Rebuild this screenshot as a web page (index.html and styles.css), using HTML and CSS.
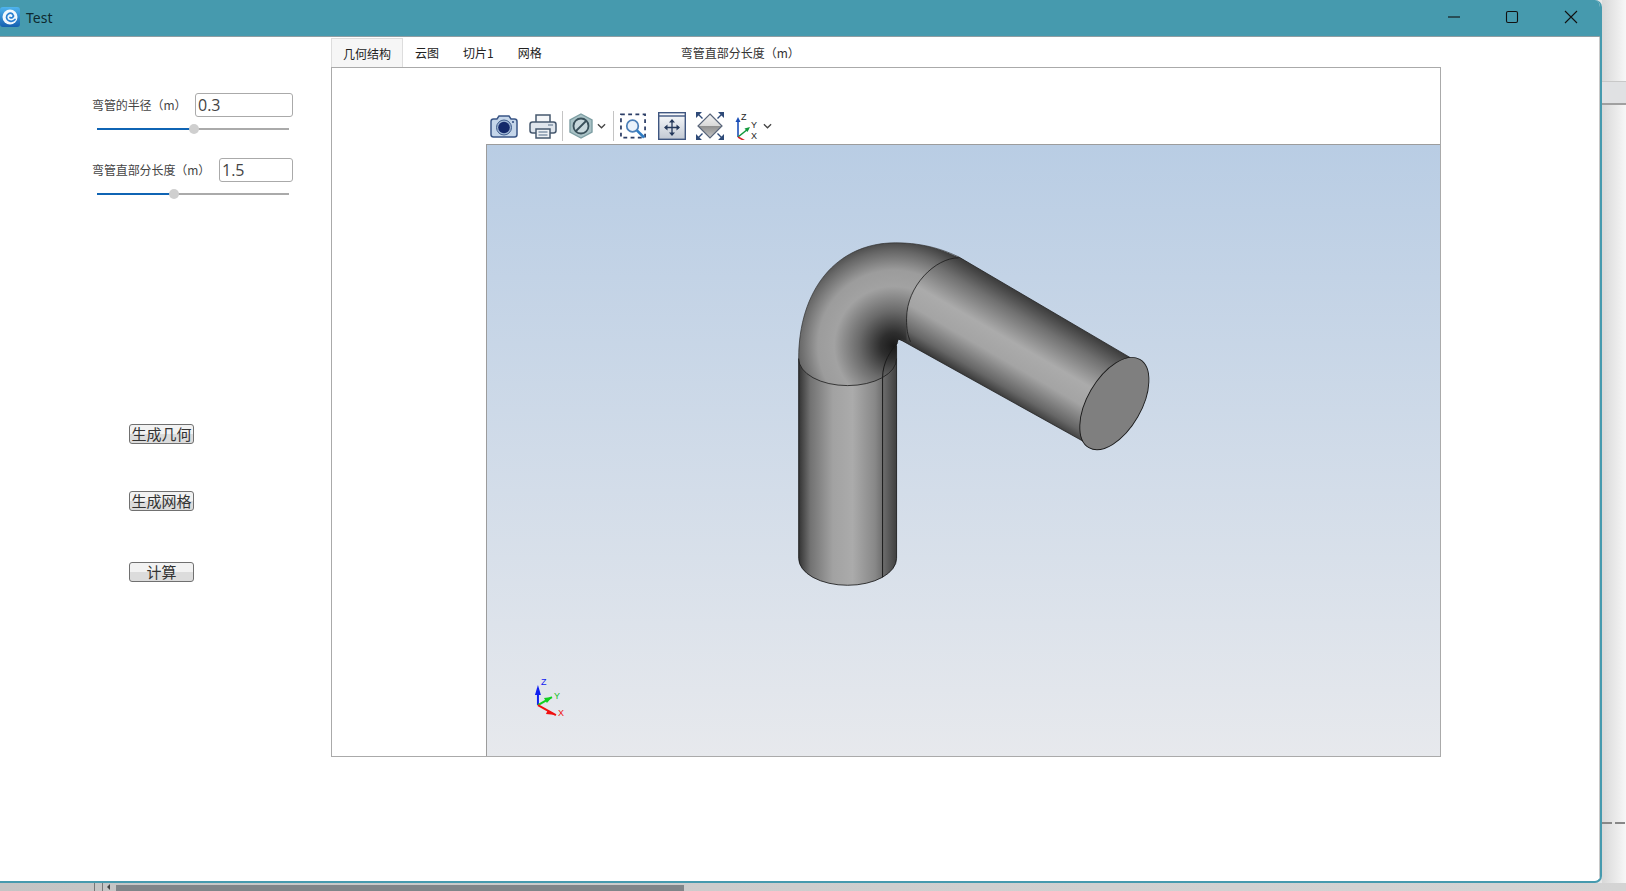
FILE: index.html
```html
<!DOCTYPE html>
<html lang="zh">
<head>
<meta charset="utf-8">
<title>Test</title>
<link rel="stylesheet" href="styles.css">
</head>
<body>
<div class="desktop">
  <div class="window">
    <header class="titlebar">
      <svg class="logo" viewBox="0 0 20 20">
        <defs><linearGradient id="lg" x1="0" y1="0" x2="0" y2="1"><stop offset="0" stop-color="#4fb4ee"/><stop offset="1" stop-color="#1560b0"/></linearGradient></defs>
        <rect width="20" height="20" rx="3" fill="url(#lg)"/>
        <circle cx="10" cy="10" r="7.500" fill="#f2f8fd"/>
        <path d="M15 12.500C12.500 15.500 7 14.500 6.500 10.500C6.300 7 10 5 12.500 7C14.500 9 12.500 12 10 10.500" fill="none" stroke="#2a7fd0" stroke-width="1.700" stroke-linecap="round"/>
      </svg>
      <span class="title">Test</span>
      <div class="controls">
        <svg class="ctl ctl-min" viewBox="0 0 14 14"><path d="M1 7H13" stroke="#111" stroke-width="1.100"/></svg>
        <svg class="ctl ctl-max" viewBox="0 0 14 14"><rect x="1.500" y="1.500" width="11" height="11" rx="1.500" fill="none" stroke="#111" stroke-width="1.100"/></svg>
        <svg class="ctl ctl-close" viewBox="0 0 14 14"><path d="M1 1L13 13M13 1L1 13" stroke="#111" stroke-width="1.100"/></svg>
      </div>
    </header>
    <div class="body">
      <aside class="sidebar">
        <div class="field">
          <div class="field-row"><label class="field-label">弯管的半径（m）</label><input class="field-input field-input-wide" value="0.3"></div>
          <div class="slider"><div class="slider-fill" style="width:50.5%"></div><div class="slider-thumb" style="left:50.5%"></div></div>
        </div>
        <div class="field">
          <div class="field-row"><label class="field-label">弯管直部分长度（m）</label><input class="field-input field-input-narrow" value="1.5"></div>
          <div class="slider"><div class="slider-fill" style="width:40%"></div><div class="slider-thumb" style="left:40%"></div></div>
        </div>
        <div class="actions">
          <button class="btn btn-geo">生成几何</button>
          <button class="btn btn-mesh">生成网格</button>
          <button class="btn btn-calc">计算</button>
        </div>
      </aside>
      <main class="main">
        <nav class="tabs">
          <span class="tab tab-active">几何结构</span>
          <span class="tab">云图</span>
          <span class="tab">切片1</span>
          <span class="tab">网格</span>
          <span class="tab-caption">弯管直部分长度（m）</span>
        </nav>
        <section class="panel">
          <div class="viewer-col">
            <div class="toolbar">
              <svg class="tool tool-camera" viewBox="0 0 28 26">
                <path d="M1 8.500Q1 6 3.500 6H7L9 3H19L21 6H24.500Q27 6 27 8.500V21.500Q27 24 24.500 24H3.500Q1 24 1 21.500Z" fill="#c5d6ea" stroke="#3a5686" stroke-width="1.500"/>
                <circle cx="14" cy="14.500" r="7.500" fill="#9fb6d4" stroke="#3f5c8c"/>
                <circle cx="14" cy="14.500" r="5.800" fill="#14296a"/>
                <circle cx="23" cy="9" r="1" fill="#2c4a80"/>
              </svg>
              <svg class="tool tool-printer" viewBox="0 0 28 26">
                <path d="M7 9V2H21V9" fill="#f4f6f8" stroke="#46586e" stroke-width="1.500"/>
                <rect x="1" y="9" width="26" height="11" rx="2.500" fill="#dfe5ec" stroke="#46586e" stroke-width="1.500"/>
                <path d="M19 12H24" stroke="#8496aa" stroke-width="1.500"/>
                <rect x="7" y="16" width="14" height="9" fill="#eef1f4" stroke="#46586e" stroke-width="1.500"/>
                <path d="M9.500 19H18.500M9.500 22H18.500" stroke="#8496aa" stroke-width="1.300"/>
              </svg>
              <span class="sep"></span>
              <svg class="tool-hex" viewBox="0 0 24 26">
                <path d="M12 1L23 7V19L12 25L1 19V7Z" fill="#a9c2c6" stroke="#7d9ea3" stroke-width="1.400"/>
                <circle cx="12" cy="13" r="7.500" fill="#c8d8dc" stroke="#39505a" stroke-width="1.800"/>
                <path d="M7 18L17 8" stroke="#39505a" stroke-width="1.800"/>
              </svg>
              <svg class="chev chev-hex" viewBox="0 0 10 6"><path d="M1 1L5 5L9 1" fill="none" stroke="#444" stroke-width="1.400"/></svg>
              <span class="sep sep-second"></span>
              <svg class="tool tool-zoom" viewBox="0 0 28 26">
                <rect x="1" y="1" width="25" height="24" fill="none" stroke="#2b3d66" stroke-width="1.800" stroke-dasharray="4 3.500"/>
                <circle cx="13" cy="13" r="6" fill="#eaf2fb" stroke="#4b7fb8" stroke-width="1.800"/>
                <path d="M17.500 17.500L25 25" stroke="#2e7cc4" stroke-width="2.800"/>
              </svg>
              <svg class="tool tool-fit" viewBox="0 0 28 28">
                <defs><linearGradient id="fg" x1="0" y1="0" x2="0" y2="1"><stop offset="0" stop-color="#fafbfd"/><stop offset="1" stop-color="#c2c9d3"/></linearGradient></defs>
                <rect x="0.700" y="0.700" width="26.600" height="26.600" fill="url(#fg)" stroke="#3f5680" stroke-width="1.400"/>
                <path d="M1 4H27" stroke="#3f5680" stroke-width="1.400"/>
                <path d="M14 8V23M7 15.500H21" stroke="#24385a" stroke-width="1.300"/>
                <path d="M14 7L11 10.500H17ZM14 24L11 20.500H17ZM6 15.500L9.500 12.500V18.500ZM22 15.500L18.500 12.500V18.500Z" fill="#24385a"/>
              </svg>
              <svg class="tool tool-iso" viewBox="0 0 28 28">
                <defs><linearGradient id="ig" x1="0" y1="0" x2="0" y2="1"><stop offset="0" stop-color="#f3f3f3"/><stop offset="0.500" stop-color="#d8d8d8"/><stop offset="0.510" stop-color="#8f8f8f"/><stop offset="1" stop-color="#c7c7c7"/></linearGradient></defs>
                <path d="M14 2L26 14L14 26L2 14Z" fill="url(#ig)" stroke="#59657a" stroke-width="1.200"/>
                <path d="M0 0H6L0 6ZM28 0H22L28 6ZM0 28H6L0 22ZM28 28H22L28 22Z" fill="#2e4a78"/>
                <path d="M1 1L6.500 6.500M27 1L21.500 6.500M1 27L6.500 21.500M27 27L21.500 21.500" stroke="#2e4a78" stroke-width="1.400"/>
              </svg>
              <svg class="tool-axis" viewBox="0 0 26 28">
                <path d="M3 25V8" stroke="#1b4fb8" stroke-width="1.600"/>
                <path d="M3 5L0.500 10H5.500Z" fill="#1b4fb8"/>
                <path d="M3 25L13 17" stroke="#12993c" stroke-width="1.600"/>
                <path d="M15 15L9.500 16.500L12.500 20Z" fill="#12993c"/>
                <path d="M3 25L13 27" stroke="#d8232a" stroke-width="1.600" transform="rotate(18 3 25)"/>
                <text class="tool-axis-label" x="6" y="8">Z</text>
                <text class="tool-axis-label" x="16" y="16">Y</text>
                <text class="tool-axis-label" x="16" y="27">X</text>
              </svg>
              <svg class="chev chev-axis" viewBox="0 0 10 6"><path d="M1 1L5 5L9 1" fill="none" stroke="#444" stroke-width="1.400"/></svg>
            </div>
            <div class="viewport">
              <svg class="scene" viewBox="486 144 954 612" preserveAspectRatio="none">
                <defs>
                  <linearGradient id="vertical" gradientUnits="userSpaceOnUse" x1="798" y1="0" x2="896" y2="0">
                    <stop offset="0" stop-color="#333"/><stop offset="0.120" stop-color="#727272"/><stop offset="0.350" stop-color="#a2a2a2"/><stop offset="0.550" stop-color="#ababab"/><stop offset="0.780" stop-color="#888"/><stop offset="1" stop-color="#3f3f3f"/>
                  </linearGradient>
                  <linearGradient id="arm" gradientUnits="userSpaceOnUse" x1="958" y1="258" x2="908" y2="344">
                    <stop offset="0" stop-color="#3f3f3f"/><stop offset="0.180" stop-color="#707070"/><stop offset="0.450" stop-color="#ababab"/><stop offset="0.650" stop-color="#a4a4a4"/><stop offset="0.880" stop-color="#666"/><stop offset="1" stop-color="#333"/>
                  </linearGradient>
                  <radialGradient id="elbow" gradientUnits="userSpaceOnUse" cx="893" cy="345" r="108">
                    <stop offset="0" stop-color="#1a1a1a"/><stop offset="0.120" stop-color="#2e2e2e"/><stop offset="0.320" stop-color="#6a6a6a"/><stop offset="0.550" stop-color="#a2a2a2"/><stop offset="0.700" stop-color="#9c9c9c"/><stop offset="0.880" stop-color="#666"/><stop offset="1" stop-color="#3c3c3c"/>
                  </radialGradient>
                </defs>
                <path d="M798 358V558A49 27 0 0 0 896 558V345L880 350Z" fill="url(#vertical)" stroke="#111" stroke-width="0.800"/>
                <path d="M798 358C798 290 835 242 895 242C925 242 945 250 963 259L930 300L908 342L898 339L896 345V358A49 27 0 0 1 798 358Z" fill="url(#elbow)"/>
                <path d="M958 256L1130 357L1085 442L898 338L906 340C906 330 906 325 906 318C906 285 935 256 958 256Z" fill="url(#arm)"/>
                <path d="M958 256L1130 357M898 338L1085 442" fill="none" stroke="#222" stroke-width="0.800"/>
                <path d="M798 358C798 290 835 242 895 242C925 242 945 250 958 256" fill="none" stroke="#333" stroke-width="0.700"/>
                <path d="M798 358A49 27 0 0 0 896 358" fill="none" stroke="#1a1a1a" stroke-width="0.800"/>
                <path d="M958 257C935 257 906 285 906 318C906 328 907 335 910 341" fill="none" stroke="#1a1a1a" stroke-width="0.800"/>
                <path d="M882 577V377C882 362 890 350 897 342" fill="none" stroke="#1a1a1a"/>
                <ellipse cx="1114" cy="403" rx="51" ry="27" transform="rotate(-60 1114 403)" fill="#7f7f7f" stroke="#1a1a1a" stroke-width="0.900"/>
                <path d="M537 705V688" stroke="#1020f0" stroke-width="2"/>
                <path d="M537 685L534 695H540Z" fill="#1020f0"/>
                <path d="M537 705L551 697" stroke="#10d020" stroke-width="2"/>
                <path d="M551 697L543 698L546 703Z" fill="#10d020"/>
                <path d="M537 705L555 715" stroke="#f01010" stroke-width="2"/>
                <path d="M555 715L547 710L545 714Z" fill="#f01010"/>
                <text class="scene-label scene-z" x="540" y="685">Z</text>
                <text class="scene-label scene-y" x="553" y="699">Y</text>
                <text class="scene-label scene-x" x="557" y="716">X</text>
              </svg>
            </div>
          </div>
        </section>
      </main>
    </div>
  </div>
  <div class="backdrop-right">
    <div class="backdrop-bar"></div>
    <div class="backdrop-dash"></div>
  </div>
  <div class="backdrop-bottom">
    <span class="tick tick-a"></span>
    <span class="tick tick-b"></span>
    <span class="arrow-left"></span>
    <span class="thumb"></span>
  </div>
</div>
</body>
</html>
```
FILE: styles.css
```css
* { box-sizing: border-box; }
html, body { margin: 0; padding: 0; }
body {
  width: 1626px;
  height: 891px;
  overflow: hidden;
  background: #e8e8e8;
  font-family: "Noto Sans CJK SC", "Noto Sans", sans-serif;
  color: #333;
}
.desktop {
  display: grid;
  grid-template-columns: 1602px 24px;
  grid-template-rows: 883px 8px;
  width: 1626px;
  height: 891px;
}
.window {
  display: flex;
  flex-direction: column;
  background: #fff;
  border-right: 2px solid #469aae;
  border-bottom: 2px solid #469aae;
  border-radius: 0 7px 7px 0;
  overflow: hidden;
}
.titlebar {
  display: flex;
  align-items: center;
  flex: 0 0 37px;
  background: #469aae;
  border-bottom: 1px solid #8f9ea3;
}
.logo { width: 20px; height: 20px; margin-top: -2px; }
.title {
  margin-left: 6px;
  margin-top: -1px;
  font-family: "Noto Sans", sans-serif;
  font-size: 14px;
  color: #0e2a30;
}
.controls {
  display: flex;
  align-items: center;
  margin-left: auto;
  margin-top: -2px;
  padding-right: 22px;
}
.ctl { width: 14px; height: 14px; }
.ctl-max { margin-left: 44px; }
.ctl-close { margin-left: 45px; }
.body {
  display: flex;
  flex: 1;
  min-height: 0;
  border-right: 1px solid #c8c8c8;
}
.sidebar {
  flex: 0 0 331px;
  padding-top: 56px;
}
.field {
  width: 200px;
  margin-left: 93px;
  margin-bottom: 28px;
}
.field-row {
  display: flex;
  align-items: center;
  justify-content: space-between;
  height: 24px;
}
.field-label {
  margin-left: -1px;
  font-size: 12px;
  line-height: 24px;
  letter-spacing: -0.1px;
  color: #444;
  white-space: nowrap;
}
.field-input {
  height: 24px;
  padding: 0 0 0 2px;
  border: 1px solid #aaa;
  border-radius: 3px;
  background: #fff;
  font-family: "Open Sans", sans-serif;
  font-size: 16px;
  color: #444;
  outline: none;
}
.field-input-wide { width: 98px; }
.field-input-narrow { width: 74px; }
.slider {
  position: relative;
  width: 192px;
  height: 2px;
  margin: 11px 0 0 4px;
  background: #aaa;
}
.slider-fill { height: 100%; background: #0f64b4; }
.slider-thumb {
  position: absolute;
  top: -4px;
  width: 10px;
  height: 10px;
  margin-left: -5px;
  border-radius: 50%;
  background: #cfcfcf;
}
.actions {
  display: flex;
  flex-direction: column;
  align-items: flex-start;
  margin: 229px 0 0 129px;
}
.btn {
  width: 65px;
  height: 20px;
  padding: 0;
  border: 1px solid #707070;
  border-radius: 3px;
  background: linear-gradient(#f2f2f2 0 50%, #dcdcdc 50% 100%);
  font-family: "Noto Sans CJK SC", sans-serif;
  font-size: 15px;
  line-height: 18px;
  color: #333;
  white-space: nowrap;
  overflow: hidden;
}
.btn-mesh { margin-top: 47px; }
.btn-calc { margin-top: 51px; }
.main {
  display: flex;
  flex-direction: column;
  flex: 0 0 1110px;
  height: 720px;
}
.tabs {
  display: flex;
  align-items: stretch;
  flex: 0 0 30px;
  min-height: 0;
  padding-top: 1px;
  font-size: 12px;
  line-height: 29px;
  color: #222;
}
.tab { padding: 0 12px; white-space: nowrap; }
.tab-active {
  width: 72px;
  padding: 0 11px;
  background: #f6f6f6;
  border: 1px solid #ddd;
  border-bottom: 0;
}
.tab-caption {
  margin-left: 127px;
  white-space: nowrap;
  color: #333;
}
.panel {
  flex: 1;
  display: flex;
  justify-content: flex-end;
  border: 1px solid #aaa;
  background: #fff;
  min-height: 0;
}
.viewer-col {
  display: flex;
  flex-direction: column;
  width: 954px;
}
.toolbar {
  display: flex;
  align-items: center;
  flex: 0 0 76px;
  padding: 40px 0 0 4px;
}
.tool { width: 28px; height: 28px; margin-right: 10px; }
.tool-camera { height: 26px; margin-right: 11px; }
.tool-printer { height: 26px; margin-right: 5px; }
.tool-zoom { width: 27px; margin-right: 11px; }
.tool-fit { margin-right: 10px; }
.tool-iso { margin-right: 11px; }
.sep { width: 1px; height: 30px; background: #c4c4c4; }
.sep-second { margin: 0 6px 0 7px; }
.tool-hex { width: 24px; height: 26px; margin-left: 6px; }
.chev { width: 9px; height: 6px; }
.chev-hex { margin-left: 4px; }
.chev-axis { margin-left: 2px; }
.tool-axis { width: 26px; height: 28px; }
.tool-axis-label { font-family: "Liberation Sans", sans-serif; font-size: 9px; fill: #222; }
.viewport {
  flex: 1;
  min-height: 0;
  border-top: 1px solid #9c9c9c;
  border-left: 1px solid #9c9c9c;
  background: linear-gradient(#b9cde4, #e7e9ed);
}
.scene { display: block; width: 100%; height: 100%; }
.scene-label { font-family: "Liberation Sans", sans-serif; font-size: 9px; }
.scene-z { fill: #1020f0; }
.scene-y { fill: #10c020; }
.scene-x { fill: #f01010; }
.backdrop-right {
  display: flex;
  flex-direction: column;
  background: linear-gradient(90deg, #d8d8d8, #f7f7f7);
}
.backdrop-bar {
  height: 24px;
  margin-top: 81px;
  background: #e0e1e3;
  border-top: 1px solid #c8c8c8;
  border-bottom: 2px solid #a0a0a0;
}
.backdrop-dash {
  height: 2px;
  margin-top: 717px;
  background: repeating-linear-gradient(90deg, #888 0 10px, transparent 10px 13px);
}
.backdrop-bottom {
  grid-column: 1 / 3;
  display: flex;
  align-items: flex-end;
  height: 8px;
  background: linear-gradient(90deg, #c4c4c4, #cfcfcf 60%, #d4d4d4);
}
.tick { width: 1px; height: 8px; background: #777; }
.tick-a { margin-left: 94px; }
.tick-b { margin-left: 7px; }
.arrow-left {
  width: 0;
  height: 0;
  margin: 0 0 1px 4px;
  border-top: 3px solid transparent;
  border-bottom: 3px solid transparent;
  border-right: 3px solid #444;
}
.thumb {
  width: 568px;
  height: 6px;
  margin-left: 6px;
  background: #808589;
}
```
